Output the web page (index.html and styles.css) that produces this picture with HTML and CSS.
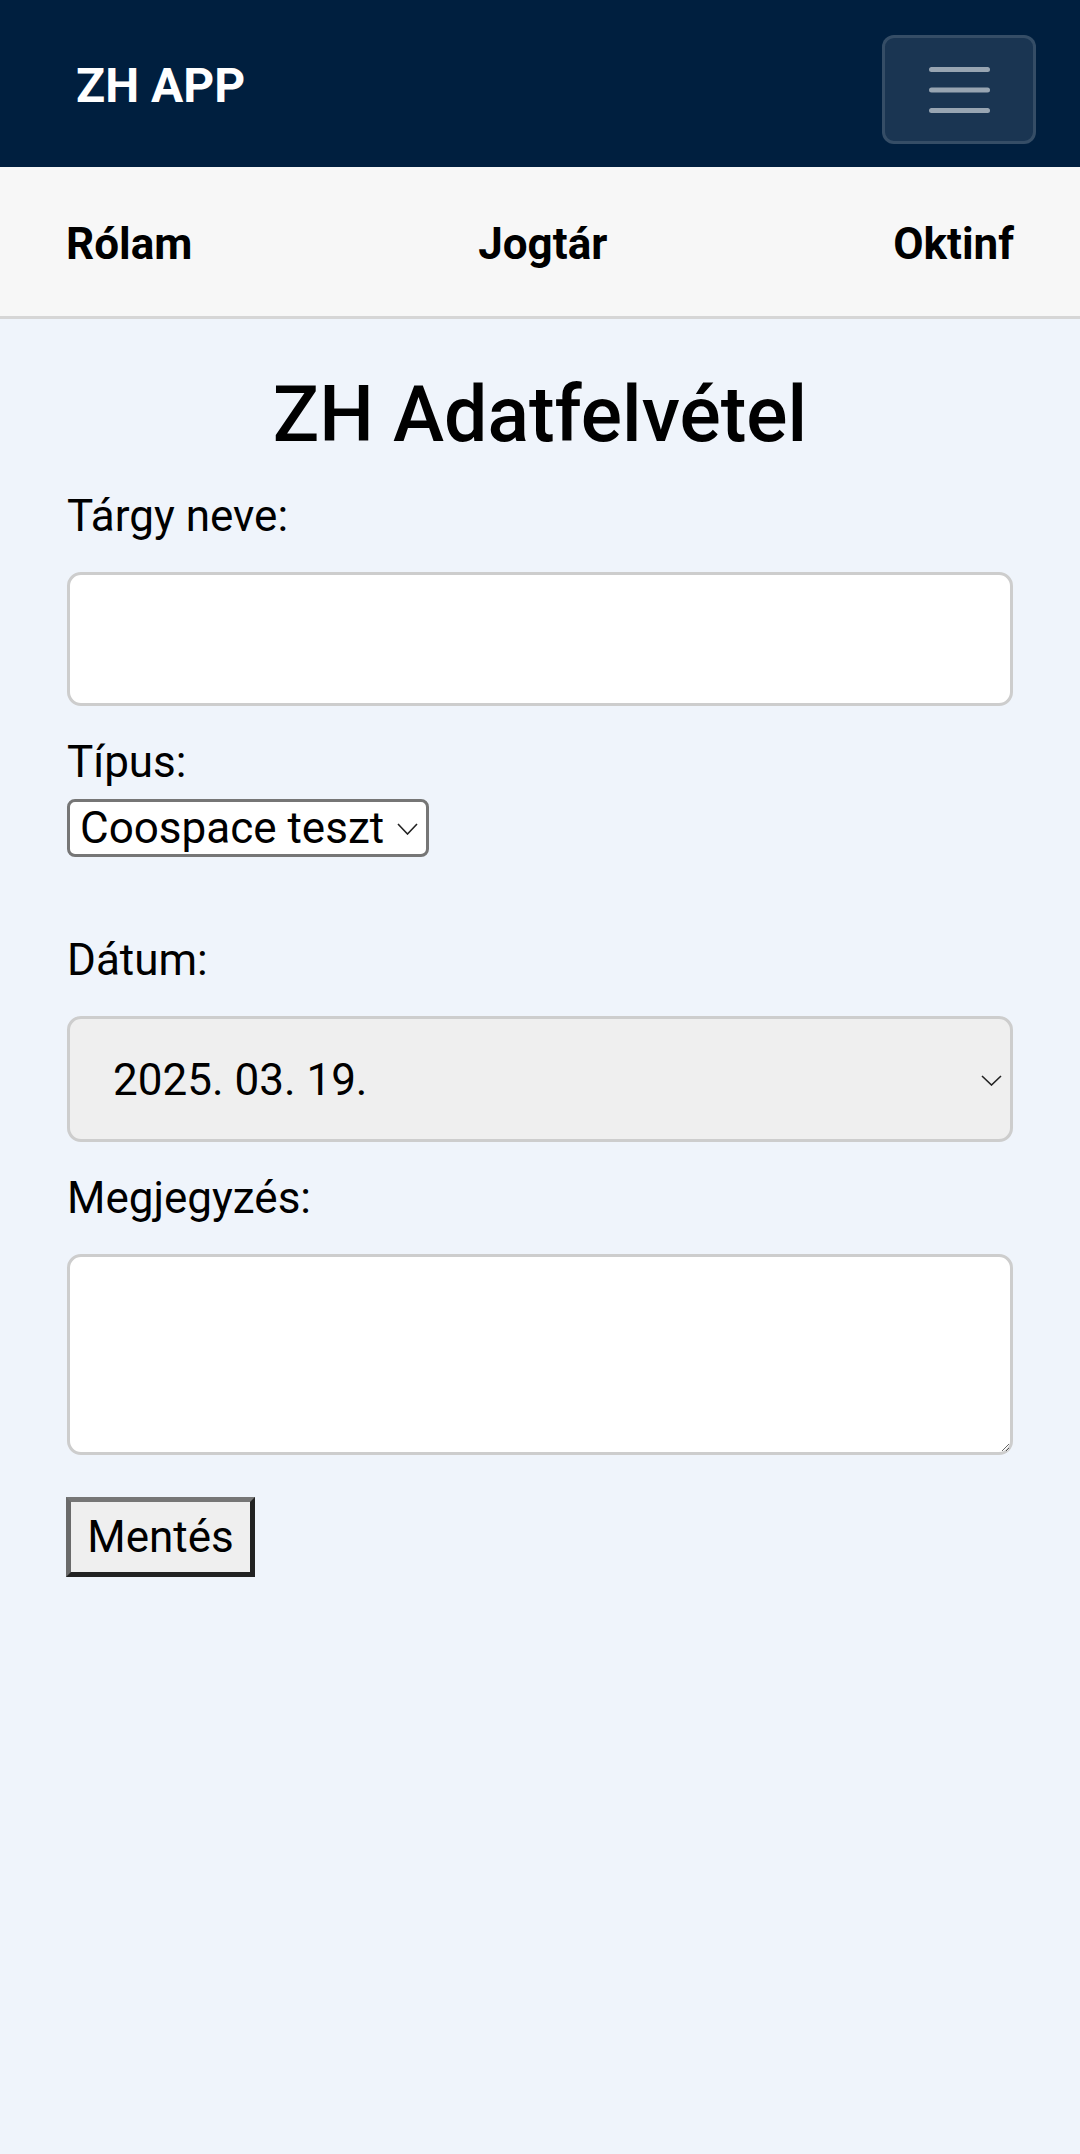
FILE: index.html
```html
<!DOCTYPE html>
<html lang="hu">
<head>
<meta charset="utf-8">
<title>ZH APP</title>
<link rel="stylesheet" href="styles.css">
</head>
<body>
<header class="topbar">
  <a class="brand" href="#">ZH APP</a>
  <button class="toggler" type="button" aria-label="Menü">
    <svg class="toggler-icon" width="61" height="50" viewBox="0 0 61 50">
      <g stroke="#98a5b2" stroke-width="5" stroke-linecap="round">
        <line x1="2.5" y1="4.5" x2="58.5" y2="4.5"/>
        <line x1="2.5" y1="25" x2="58.5" y2="25"/>
        <line x1="2.5" y1="45.5" x2="58.5" y2="45.5"/>
      </g>
    </svg>
  </button>
</header>
<nav class="subnav">
  <a href="#">Rólam</a>
  <a href="#">Jogtár</a>
  <a href="#">Oktinf</a>
</nav>
<main class="content">
  <h1 class="title">ZH Adatfelvétel</h1>
  <form class="zh-form">
    <label class="field-label" for="targy">Tárgy neve:</label>
    <input class="text-input" id="targy" type="text">

    <label class="field-label tight" for="tipus">Típus:</label>
    <div class="select-wrap">
      <select class="native-select" id="tipus">
        <option>Coospace teszt</option>
      </select>
      <svg class="select-chevron" width="21" height="12" viewBox="0 0 21 12">
        <polyline points="1,1 10.5,11 20,1" fill="none" stroke="#222" stroke-width="1.6"/>
      </svg>
    </div>

    <label class="field-label" for="datum">Dátum:</label>
    <div class="date-field" id="datum">
      <span class="date-value">2025. 03. 19.</span>
      <svg class="date-chevron" width="21" height="11" viewBox="0 0 21 11">
        <polyline points="1,1 10.5,10 20,1" fill="none" stroke="#222" stroke-width="1.6"/>
      </svg>
    </div>

    <label class="field-label" for="megj">Megjegyzés:</label>
    <textarea class="text-area" id="megj"></textarea>

    <button class="save-btn" type="button">Mentés</button>
  </form>
</main>
</body>
</html>
```
FILE: styles.css
```css
* { box-sizing: border-box; }

html, body {
  margin: 0;
  padding: 0;
}

body {
  background: #eff4fb;
  font-family: Roboto, "Liberation Sans", Arial, sans-serif;
  font-size: 44px;
  line-height: 66px;
  color: #000;
  min-height: 2154px;
}

.topbar {
  height: 167px;
  background: #001f3f;
  display: flex;
  justify-content: space-between;
  align-items: center;
  padding: 0 44px 0 76px;
}

.brand {
  color: #fff;
  font-weight: 700;
  font-size: 48px;
  line-height: 72px;
  text-decoration: none;
  margin-top: 4px;
}

.toggler {
  width: 154px;
  height: 109px;
  margin-top: 12px;
  background: rgba(255, 255, 255, 0.1);
  border: 3px solid rgba(255, 255, 255, 0.12);
  border-radius: 12px;
  padding: 0;
  display: flex;
  align-items: center;
  justify-content: center;
}

.toggler-icon { display: block; }

.subnav {
  background: #f7f7f7;
  border-bottom: 3px solid #d6d6d6;
  display: flex;
  justify-content: space-between;
  padding: 44px 66px 39px;
}

.subnav a {
  color: #000;
  font-weight: 700;
  text-decoration: none;
  line-height: 66px;
}

.content {
  padding: 0 67px 0 67px;
}

.title {
  margin: 50px 0 22px;
  text-align: center;
  font-size: 77px;
  line-height: 92px;
  font-weight: 500;
}

.zh-form {
  display: flex;
  flex-direction: column;
  align-items: stretch;
}

.field-label {
  display: block;
  margin-bottom: 23px;
}

.field-label.tight { margin-bottom: 4px; }

.text-input {
  display: block;
  height: 134px;
  background: #fff;
  border: 3px solid #cdcdcd;
  border-radius: 14px;
  margin: 0 0 23px;
  font: inherit;
  padding: 0 44px;
}

.select-wrap {
  position: relative;
  align-self: flex-start;
  width: 362px;
  height: 58px;
  margin-bottom: 70px;
}

.native-select {
  appearance: none;
  -webkit-appearance: none;
  display: block;
  width: 362px;
  height: 58px;
  margin: 0;
  background: #fff;
  border: 3px solid #767676;
  border-radius: 8px;
  font-family: Roboto, "Liberation Sans", Arial, sans-serif;
  font-size: 44px;
  line-height: 52px;
  padding: 0 36px 0 10px;
  color: #000;
}

.select-chevron {
  position: absolute;
  left: 330px;
  top: 24px;
  pointer-events: none;
}

.date-field {
  height: 126px;
  background: #efefef;
  border: 3px solid #cdcdcd;
  border-radius: 14px;
  display: flex;
  align-items: center;
  justify-content: space-between;
  padding: 0 8px 0 43px;
  margin-bottom: 23px;
}

.date-value {
  line-height: 66px;
  margin-top: 2px;
}

.date-chevron { display: block; margin-top: 2px; }

.text-area {
  display: block;
  height: 201px;
  background: #fff;
  border: 3px solid #cdcdcd;
  border-radius: 14px;
  margin: 0 0 42px;
  font: inherit;
  resize: vertical;
}

.save-btn {
  align-self: flex-start;
  width: 189px;
  height: 80px;
  margin-left: -1px;
  background: #efefef;
  border-width: 5px;
  border-style: solid;
  border-color: #767676 #222 #222 #6a6a6a;
  font-family: Roboto, "Liberation Sans", Arial, sans-serif;
  font-size: 44px;
  line-height: 66px;
  padding: 0 16px;
  color: #000;
}
```
